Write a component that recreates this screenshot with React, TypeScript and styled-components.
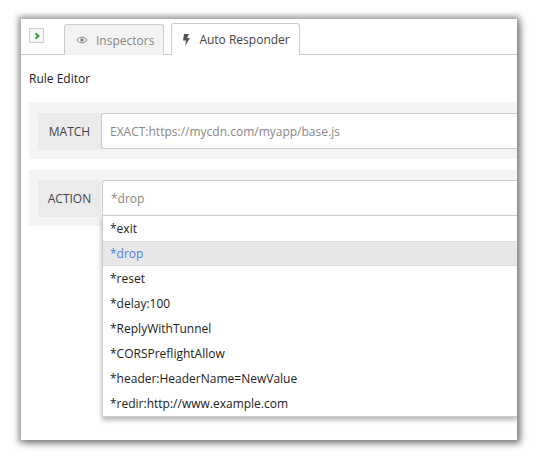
import React from "react";
import styled, { createGlobalStyle } from "styled-components";

const G = createGlobalStyle`
  body { margin: 0; background: #fff; font-family: "Open Sans", "Segoe UI", sans-serif; font-size: 12px; color: #333; }
`;
const Stage = styled.div`width:543px;height:464px;padding:19px 0 0 21px;box-sizing:border-box;`;
const Win = styled.div`
  width:496px;height:421px;background:#fff;overflow:hidden;position:relative;
  box-shadow: 0 0 6px 3px rgba(0,0,0,0.35), 3px 3px 8px rgba(0,0,0,0.3);
`;
const TabBar = styled.div`display:flex;align-items:flex-end;height:36px;border-bottom:1px solid #ccc;padding-left:8px;gap:7px;box-sizing:border-box;`;
const Toggle = styled.div`align-self:flex-start;margin-top:9px;width:13px;height:13px;border:1px solid #ccc;background:#f8f8f8;display:flex;align-items:center;justify-content:center;margin-right:13px;`;
const Tab = styled.div<{ $active?: boolean }>`
  height:30px;display:flex;align-items:center;gap:8px;padding:0 9px 0 ${p=>p.$active?10:11}px;
  border:1px solid #ccc;border-bottom:none;border-radius:3px 3px 0 0;margin-bottom:-1px;
  background:${p=>p.$active?"#fff":"#f3f3f3"};color:${p=>p.$active?"#444":"#888"};font-size:12px;
  ${p=>p.$active?"height:31px;":""}
`;
const Title = styled.div`padding:15px 0 0 8px;font-size:12px;color:#222;height:32px;`;
const Panel = styled.div`margin:0 0 11px 8px;background:#f3f4f4;padding:11px 0 9px 9px;display:flex;`;
const Label = styled.div<{ $tall?: boolean }>`width:63px;height:37px;background:#ecebec;display:flex;align-items:center;justify-content:center;color:#444;font-size:12px;flex:none;`;
const Field = styled.div<{ $open?: boolean }>`
  flex:1;height:36px;background:#fff;border:1px solid #ccc;border-right:none;border-radius:${p=>p.$open?"3px 0 0 0":"3px 0 0 3px"};
  display:flex;align-items:center;padding-left:8px;color:#888;font-size:12px;box-sizing:border-box;
`;
const Wrap = styled.div`flex:1;position:relative;`;
const Menu = styled.div`position:absolute;left:0;right:0;top:35px;background:#fff;border:1px solid #ccc;border-right:none;box-shadow:0 3px 5px rgba(0,0,0,0.3);z-index:2;`;
const Item = styled.div<{ $sel?: boolean }>`height:25px;display:flex;align-items:center;padding-left:7px;font-size:12px;color:${p=>p.$sel?"#4a7fe0":"#222"};background:${p=>p.$sel?"#e8e8e8":"#fff"};${p=>p.$sel?"border-top:1px solid #ddd;border-bottom:1px solid #ddd;height:23px;":""}`;

const items = ["*exit","*drop","*reset","*delay:100","*ReplyWithTunnel","*CORSPreflightAllow","*header:HeaderName=NewValue","*redir:http://www.example.com"];

export default function App() {
  return (
    <Stage>
      <G />
      <Win>
        <TabBar>
          <Toggle><svg width="8" height="8" viewBox="0 0 8 8"><path d="M2.5 1.5 L5.5 4 L2.5 6.5" stroke="#2a9d2a" strokeWidth="1.8" fill="none"/></svg></Toggle>
          <Tab>
            <svg width="12" height="10" viewBox="0 0 12 10"><path d="M0.8 5 Q6 -1 11.2 5 Q6 11 0.8 5Z" fill="none" stroke="#888" strokeWidth="1"/><circle cx="6" cy="5" r="1.8" fill="#888"/></svg>
            Inspectors
          </Tab>
          <Tab $active>
            <svg width="9" height="12" viewBox="0 0 9 12"><path d="M2 0 L7 0 L5 4 L8 4 L3 12 L4 6.5 L1 6.5Z" fill="#555"/></svg>
            Auto Responder
          </Tab>
        </TabBar>
        <Title>Rule Editor</Title>
        <Panel>
          <Label>MATCH</Label>
          <Field>EXACT:https://mycdn.com/myapp/base.js</Field>
        </Panel>
        <Panel style={{paddingTop:10}}>
          <Label>ACTION</Label>
          <Wrap style={{marginLeft:1}}>
            <Field $open>*drop</Field>
            <Menu>{items.map(i=><Item key={i} $sel={i==="*drop"}>{i}</Item>)}</Menu>
          </Wrap>
        </Panel>
      </Win>
    </Stage>
  );
}
